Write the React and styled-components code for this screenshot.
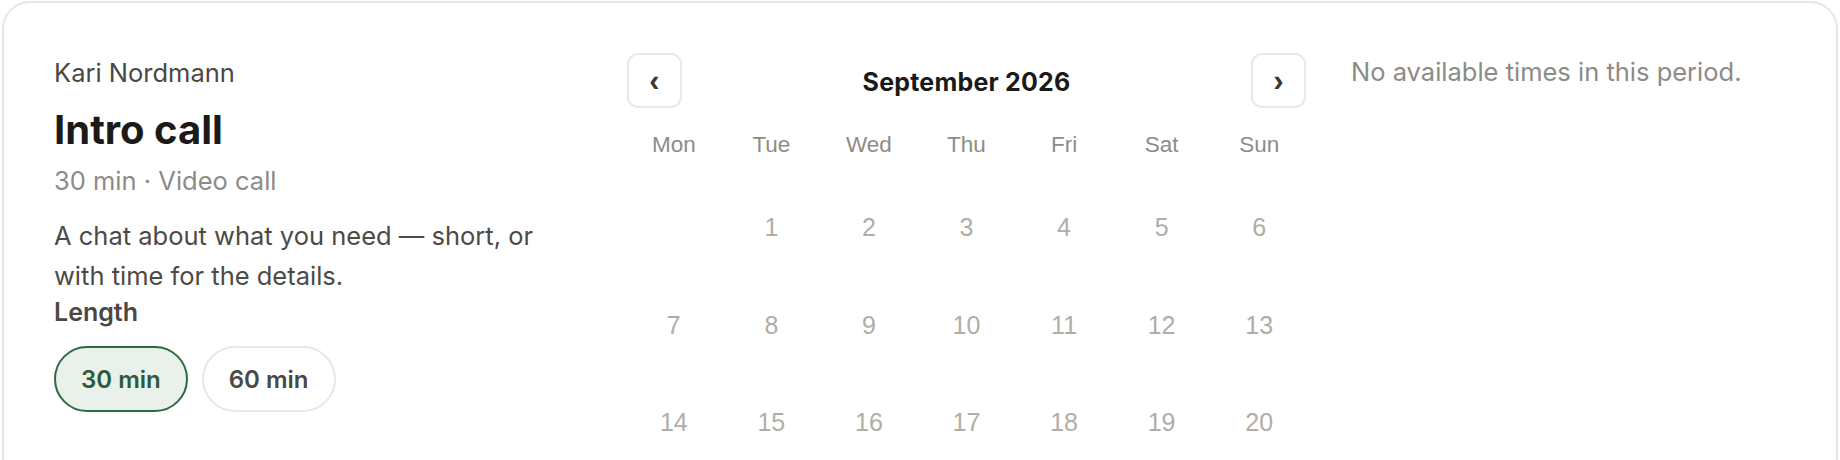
import React from 'react';
import styled, { createGlobalStyle } from 'styled-components';

const GlobalStyle = createGlobalStyle`
  html, body {
    margin: 0;
    padding: 0;
    background: #ffffff;
    overflow: hidden;
  }
  body {
    font-family: Inter, "Noto Sans", sans-serif;
  }
`;

const Card = styled.div`
  margin: 1px 2px 0;
  min-height: 500px;
  border: 2px solid #e8e6e1;
  border-radius: 28px;
  background: #ffffff;
  box-sizing: border-box;
  padding: 52px 0 0 50px;
  display: grid;
  grid-template-columns: 526px 679px 1fr;
  column-gap: 47px;
  align-items: start;
`;

const Info = styled.div`
  display: flex;
  flex-direction: column;
`;

const Host = styled.div`
  font-size: 25.5px;
  line-height: 35px;
  color: #4a4844;
`;

const Title = styled.h1`
  margin: 16px 0 0;
  font-size: 40px;
  line-height: 48px;
  font-weight: 700;
  color: #1b1a18;
`;

const Meta = styled.div`
  margin-top: 9px;
  font-size: 25.5px;
  line-height: 35px;
  color: #8d8b86;
`;

const Description = styled.p`
  margin: 18px 0 0;
  max-width: 500px;
  font-size: 25.5px;
  line-height: 40px;
  color: #4d4a46;
`;

const Label = styled.div`
  font-size: 25px;
  line-height: 32px;
  font-weight: 600;
  color: #4a4844;
`;

const Options = styled.div`
  margin-top: 18px;
  display: flex;
  gap: 14px;
`;

const Pill = styled.button`
  height: 66px;
  padding: 0 25px;
  border-radius: 999px;
  border: 2px solid ${p => (p.active ? '#2f6a45' : '#e9e7e2')};
  background: ${p => (p.active ? '#e9f1ea' : '#ffffff')};
  color: ${p => (p.active ? '#2c5a3c' : '#4a4844')};
  font-family: Inter, "Noto Sans", sans-serif;
  font-size: 24px;
  font-weight: 600;
  cursor: pointer;
`;

const Calendar = styled.div`
  display: flex;
  flex-direction: column;
  margin-top: -2px;
`;

const Header = styled.div`
  height: 55px;
  display: flex;
  align-items: center;
  justify-content: space-between;
`;

const NavButton = styled.button`
  width: 55px;
  height: 55px;
  display: flex;
  align-items: center;
  justify-content: center;
  border: 2px solid #ebe9e4;
  border-radius: 11px;
  background: #ffffff;
  color: #3b3834;
  font-family: "Liberation Sans", Arial, sans-serif;
  font-size: 31px;
  font-weight: 700;
  line-height: 1;
  padding: 0 0 1px;
  cursor: pointer;
`;

const Month = styled.div`
  font-family: Inter, sans-serif;
  font-size: 25px;
  font-weight: 700;
  color: #1b1a18;
  letter-spacing: 0.2px;
  padding-top: 2px;
`;

const Weekdays = styled.div`
  margin-top: 22px;
  display: grid;
  grid-template-columns: repeat(7, 1fr);
  column-gap: 4px;
`;

const Weekday = styled.div`
  height: 30px;
  line-height: 30px;
  text-align: center;
  font-family: "Liberation Sans", Arial, sans-serif;
  font-size: 22.5px;
  color: #8e8c87;
`;

const Days = styled.div`
  margin-top: 21px;
  display: grid;
  grid-template-columns: repeat(7, 1fr);
  grid-auto-rows: 93.5px;
  gap: 4px;
`;

const Day = styled.div`
  display: flex;
  align-items: center;
  justify-content: center;
  font-family: "Liberation Sans", Arial, sans-serif;
  font-size: 25px;
  color: #afada7;
`;

const Slots = styled.div`
  margin: -1px 0 0 -2px;
  font-size: 25.5px;
  line-height: 36px;
  color: #8d8b86;
`;

const weekdays = ['Mon', 'Tue', 'Wed', 'Thu', 'Fri', 'Sat', 'Sun'];

// September 2026 starts on a Tuesday
const cells = [null, ...Array.from({ length: 30 }, (_, i) => i + 1)];

export default function App() {
  const [length, setLength] = React.useState(30);

  return (
    <>
      <GlobalStyle />
      <Card>
        <Info>
          <Host>Kari Nordmann</Host>
          <Title>Intro call</Title>
          <Meta>{length} min · Video call</Meta>
          <Description>
            A chat about what you need — short, or with time for the details.
          </Description>
          <Label>Length</Label>
          <Options>
            <Pill active={length === 30} onClick={() => setLength(30)}>30 min</Pill>
            <Pill active={length === 60} onClick={() => setLength(60)}>60 min</Pill>
          </Options>
        </Info>

        <Calendar>
          <Header>
            <NavButton aria-label="Previous month">‹</NavButton>
            <Month>September 2026</Month>
            <NavButton aria-label="Next month">›</NavButton>
          </Header>
          <Weekdays>
            {weekdays.map(d => <Weekday key={d}>{d}</Weekday>)}
          </Weekdays>
          <Days>
            {cells.map((d, i) => <Day key={i}>{d}</Day>)}
          </Days>
        </Calendar>

        <Slots>No available times in this period.</Slots>
      </Card>
    </>
  );
}
